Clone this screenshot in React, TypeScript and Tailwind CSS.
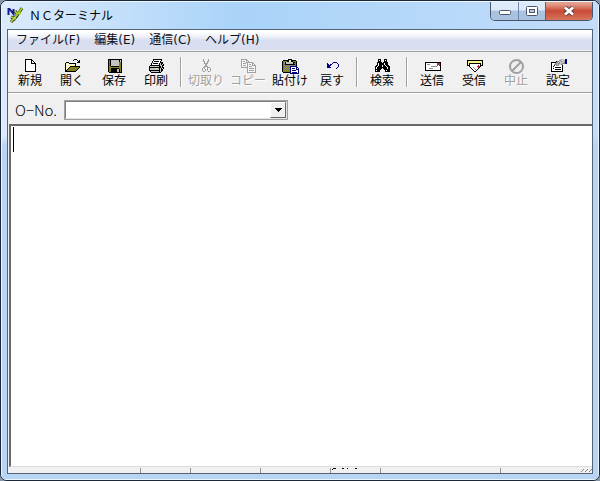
import React from "react";

const PALETTE: Record<string, string> = {
  k: "#000000",
  w: "#ffffff",
  y: "#f5f08a",
  o: "#808020",
  g: "#8c8c8c",
  s: "#c4c4c4",
  b: "#000080",
  r: "#c02040",
  l: "#a0a0a0",
  v: "#f8f8f8",
};

const ICONS: Record<string, string[]> = {
  blank: [
    "",
    "...kkkkkkk",
    "...kwwwwwkk",
    "...kwwwwwkwk",
    "...kwwwwwkwwk",
    "...kwwwwwkkkkk",
    "...kwwwwwwwwwk",
    "...kwwwwwwwwwk",
    "...kwwwwwwwwwk",
    "...kwwwwwwwwwk",
    "...kwwwwwwwwwk",
    "...kwwwwwwwwwk",
    "...kwwwwwwwwwk",
    "...kkkkkkkkkkk",
  ],
  open: [
    "",
    "..........kkk",
    ".........k...k.k",
    "..............kk",
    "..kkk........kkk",
    ".kywykkkkkkk",
    ".kwywywywywk",
    ".kywywywywyk",
    ".kwywykkkkkkkkkk",
    ".kywykoooooooook",
    ".kwykoooooooook",
    ".kykoooooooook",
    ".kkoooooooook",
    ".kkkkkkkkkkk",
  ],
  save: [
    "",
    "..kkkkkkkkkkkkkk",
    "..kokssssssssksk",
    "..kokssssssssksk",
    "..kokssssssssook",
    "..kokssssssssook",
    "..kokssssssssook",
    "..kokssssssssook",
    "..kookkkkkkkkook",
    "..kooooooooooook",
    "..kookkkkkkkkook",
    "..kookkkkkksskok",
    "..kookkkkkksskok",
    "..kookkkkkksskok",
    "...kkkkkkkkkkkkk",
  ],
  print: [
    "",
    ".....kkkkkkkkk",
    ".....kwwwwwwwk",
    "....kwkkkkkwk",
    "....kwwwwwwwkkk",
    "...kwkkkkkwkskk",
    "...kwwwwwwwksksk",
    "..kkkkkkkkkksskk",
    ".kssssssssskksk",
    ".kkkkkkkkkkkkskk",
    ".ksssssyyssksksk",
    ".kssssssssskskk",
    ".kkkkkkkkkkkskk",
    "..kssssssssksk",
    "...kkkkkkkkkk",
  ],
  cut: [
    "",
    ".....l....l",
    ".....l....l",
    ".....ll..ll",
    "......l..l",
    "......llll",
    ".......ll",
    ".......ll",
    "......llll",
    ".....ll..lll",
    "....l.l..l..l",
    "....l..l.l..l",
    "....l..l.l..l",
    ".....ll...ll",
  ],
  copy: [
    "",
    ".llllll",
    ".lvvvvll",
    ".lvllvlvl",
    ".lvvvvlllllll",
    ".lvlllvlvvvvll",
    ".lvvvvvlvllvlvl",
    ".lvlllvlvvvvllll",
    ".lvvvvvlvlllvvvl",
    ".lllllllvvvvvvvl",
    ".......lvlllllvl",
    ".......lvvvvvvvl",
    ".......lvlllllvl",
    ".......lvvvvvvvl",
    ".......lllllllll",
  ],
  paste: [
    "",
    "......kkkk",
    ".kkkkkkyykkkkk",
    "kooookkyykkoook",
    "kogkssssssskkok",
    "kogkssssssskook",
    "kookkkkkkkkkkok",
    "kogogogogogogok",
    "koogogogbbbbbbb",
    "kogogogobwwwwwbb",
    "koogogogbwbbbwbwb",
    "kogogogobwwwwwbbb",
    "koogogogbwbbbbwwb",
    "kooooooobwwwwwwwb",
    ".kkkkkkkbwbbbbbwb",
    "........bbbbbbbbb",
  ],
  undo: [
    "",
    "",
    "",
    "",
    ".........bbbb",
    "...b....b....b",
    "...bb.bb......b",
    "...bbbb.......b",
    "...bbb........b",
    "...bbbb......b",
    "............b",
  ],
  find: [
    "",
    "....kkk...kkk",
    "....kwk...kwk",
    "....kkk...kkk",
    "...kkkkk.kkkkk",
    "...kwkkkkkwkkk",
    "...kwkkkkkwkkk",
    "..kkwkkkwkkwkkk",
    ".kkwkkkkwkkkwkkk",
    ".kwkkkkkkkkkkwkk",
    ".kwkkkkk.kkkkwkk",
    ".kkkkkk...kkkkkk",
    ".kwkkk.....kwkkk",
    ".kkkkk.....kkkkk",
  ],
  send: [
    "",
    "",
    "",
    "",
    ".kkkkkkkkkkkkkkkk",
    ".kwwwwwwwwwwwrrrk",
    ".kwgggwwwwwwwrrrk",
    ".kwwwwwwwwwwwrwrk",
    ".kwwwwwggggggwwwk",
    ".kwwwwwwwwwwwwwwk",
    ".kwwwggggwwwwwwwk",
    ".kwwwwwwwwwwwwwwk",
    ".kkkkkkkkkkkkkkkk",
  ],
  receive: [
    "",
    "",
    ".kkkkkkkkkkkkkkkk",
    ".kyyyyyyyyyyyyyyk",
    ".kyyyyyyyyyyyyyyk",
    ".kykkkkkkkkkkkkyk",
    ".kykwwwwwwwwwwkyk",
    ".kkkwwwwwwwwrwkkk",
    "...kwwwwwwwrrrk",
    "....kwwgwwwwrk",
    ".....kwwgwwwk",
    "......kwwgwk",
    ".......kwwk",
    "........kk",
  ],
  settings: [
    "",
    "..........ssss.bb",
    ".........ggssssbb",
    "......kggssgssgbb",
    ".kkkkkggsgssssgbb",
    ".kwwwggsggssgggbb",
    ".kwwgggsgssgg",
    ".kwwkwgggwwwk",
    ".kwkwwwwwwwwk",
    ".kwwwkkkkkkwk",
    ".kwkwwwwwwwwk",
    ".kwwwkkkkkkwk",
    ".kwwwwwwwwwwk",
    ".kkkkkkkkkkkk",
  ],
};

function Glyph({ name }: { name: string }) {
  if (name === "stop") {
    return (
      <svg className="block size-4" viewBox="0 0 16 16" fill="none" aria-hidden="true">
        <circle cx="8.5" cy="8.5" r="6.5" stroke="#a0a0a0" strokeWidth="2" />
        <path d="M4 13 13 4" stroke="#a0a0a0" strokeWidth="2" />
      </svg>
    );
  }
  return (
    <svg className="block h-4 w-[17px]" viewBox="0 0 17 16" shapeRendering="crispEdges" aria-hidden="true">
      {ICONS[name].map((row, y) =>
        row.split("").map((c, x) =>
          c === "." ? null : <rect key={`${x}-${y}`} x={x} y={y} width="1" height="1" fill={PALETTE[c]} />
        )
      )}
    </svg>
  );
}

type Tool = { label: string; icon: string; disabled?: boolean };

const GROUPS: Tool[][] = [
  [
    { label: "新規", icon: "blank" },
    { label: "開く", icon: "open" },
    { label: "保存", icon: "save" },
    { label: "印刷", icon: "print" },
  ],
  [
    { label: "切取り", icon: "cut", disabled: true },
    { label: "コピー", icon: "copy", disabled: true },
    { label: "貼付け", icon: "paste" },
    { label: "戻す", icon: "undo" },
  ],
  [{ label: "検索", icon: "find" }],
  [
    { label: "送信", icon: "send" },
    { label: "受信", icon: "receive" },
    { label: "中止", icon: "stop", disabled: true },
    { label: "設定", icon: "settings" },
  ],
];

function TitleBar() {
  return (
    <header className="flex h-[27px] items-start justify-between">
      <div className="flex items-center gap-[6px] pt-[3px]">
        <svg className="h-[17px] w-4" viewBox="0 0 16 17" aria-hidden="true">
          <path d="M1.5 8V2h1l4 5V2" fill="none" stroke="#101c90" strokeWidth="2" />
          <path d="M15 1 9 10 4 15M8 4l3 4M4 10l5 2" fill="none" stroke="#253018" strokeWidth="3" />
          <path d="M15 1 10 8 4 15M8 4l3 4M4 10l5 2M12 7l2-1" fill="none" stroke="#b0d428" strokeWidth="1.8" />
        </svg>
        <h1 className="text-xs leading-5 text-black">ＮＣターミナル</h1>
      </div>
      <div className="flex h-[19px] w-[103px] overflow-hidden rounded-b-[5px] border border-t-0 border-[#46566c]">
        <button
          aria-label="最小化"
          className="flex w-7 items-center justify-center border-r border-[#7189a6] bg-linear-to-b from-[#dceafa] from-45% to-[#a9c2df] to-50% pt-1"
        >
          <svg className="h-[6px] w-3" viewBox="0 0 12 6" aria-hidden="true">
            <rect x=".5" y=".5" width="11" height="4" rx="1" fill="#fff" stroke="#4d5668" />
          </svg>
        </button>
        <button
          aria-label="最大化"
          className="flex w-[27px] items-center justify-center border-r border-[#59606e] bg-linear-to-b from-[#dceafa] from-45% to-[#a9c2df] to-50%"
        >
          <svg className="h-[10px] w-3" viewBox="0 0 12 10" aria-hidden="true">
            <rect x=".5" y=".5" width="11" height="9" rx="1" fill="#fff" stroke="#4d5668" />
            <rect x="3.5" y="3.5" width="5" height="3" fill="#b8cce4" stroke="#4d5668" />
          </svg>
        </button>
        <button
          aria-label="閉じる"
          className="flex flex-1 items-center justify-center bg-linear-to-b from-[#e3a08f] from-10% via-[#c94a35] via-50% to-[#d4755b]"
        >
          <svg className="h-[10px] w-3" viewBox="0 0 12 10" aria-hidden="true">
            <path d="m2 1.5 8 7m0-7-8 7" stroke="#583c40" strokeWidth="4.6" />
            <path d="m2 1.5 8 7m0-7-8 7" stroke="#fff" strokeWidth="2.8" />
          </svg>
        </button>
      </div>
    </header>
  );
}

function MenuBar() {
  return (
    <nav className="flex h-[21px] shrink-0 items-center gap-[14px] border-b border-[#f0f0f0] bg-linear-to-b from-white from-10% via-[#e8ecf6] via-40% to-[#d9def0] to-50% px-2 font-['DejaVu_Sans','Noto_Sans_CJK_JP',sans-serif]">
      {["ファイル(F)", "編集(E)", "通信(C)", "ヘルプ(H)"].map((m) => (
        <button key={m} className="text-xs leading-5 whitespace-nowrap text-[#101018]">
          {m}
        </button>
      ))}
    </nav>
  );
}

function ToolBar() {
  return (
    <div role="toolbar" className="flex h-[42px] shrink-0 border-t border-b border-t-[#a0a0a0] border-b-[#a0a0a0] pl-px">
      {GROUPS.map((group, i) => (
        <React.Fragment key={i}>
          {i > 0 && (
            <div className="flex w-2 shrink-0 justify-center py-[5px]">
              <div className="w-[2px] border-r border-l border-r-white border-l-[#a0a0a0]" />
            </div>
          )}
          {group.map((t) => (
            <button
              key={t.label}
              disabled={t.disabled}
              className="flex w-[42px] shrink-0 flex-col items-center pt-[6px] text-xs leading-3 whitespace-nowrap text-black disabled:text-[#a0a0a0]"
            >
              <Glyph name={t.icon} />
              <span className={t.disabled ? "[text-shadow:1px_1px_0_#fff]" : ""}>{t.label}</span>
            </button>
          ))}
        </React.Fragment>
      ))}
    </div>
  );
}

function ProgramNumber() {
  return (
    <div className="flex h-[31px] shrink-0 items-center gap-2 border-t border-white pt-[2px] pl-[7px]">
      <label htmlFor="ono" className="w-[41px] text-[15px] leading-5 font-light whitespace-nowrap text-black">
        O−No.
      </label>
      <div className="relative h-5 w-56">
        <select
          id="ono"
          className="block size-full appearance-none border-2 border-t-[#808080] border-r-[#e4e4e4] border-b-[#e4e4e4] border-l-[#808080] bg-white pl-1 text-xs outline-1 -outline-offset-1 outline-[#a0a0a0]"
        >
          <option></option>
        </select>
        <span className="pointer-events-none absolute top-[2px] right-[2px] flex h-4 w-4 items-center justify-center border border-t-white border-r-[#696969] border-b-[#696969] border-l-white bg-[#f0f0f0]">
          <svg className="h-1 w-[7px]" viewBox="0 0 7 4" shapeRendering="crispEdges" aria-hidden="true">
            <path d="M0 0h7v1H6v1H5v1H4v1H3V3H2V2H1V1H0z" />
          </svg>
        </span>
      </div>
    </div>
  );
}

function Editor() {
  return (
    <div className="relative ml-px flex min-h-0 flex-1">
      <textarea
        aria-label="プログラム"
        className="block w-full resize-none border-t-2 border-b border-l-2 border-t-[#696969] border-b-[#d8dde2] border-l-[#696969] bg-white p-1 text-base outline-none"
      />
      <span className="pointer-events-none absolute top-[3px] left-1 h-[25px] w-px bg-black" />
    </div>
  );
}

function StatusBar() {
  return (
    <footer className="flex h-[6px] shrink-0 items-end justify-between bg-[#f0f0f0] pl-1">
      <div className="flex h-[5px]">
        <div className="w-[129px] border-r border-[#909090]" />
        <div className="w-[50px] border-r border-[#909090]" />
        <div className="w-[70px] border-r border-[#909090]" />
        <div className="w-[70px] border-r border-[#909090]" />
        <div className="w-[50px] border-r border-[#909090]">
          <svg className="block h-[2px] w-7" viewBox="0 0 28 2" shapeRendering="crispEdges" aria-hidden="true">
            <path d="M2 0h3v1H2zM1 1h1v1H1zM11 0h2v1h-2zM16 0h1v1h-1zM24 0h2v1h-2z" />
          </svg>
        </div>
        <div className="w-[120px] border-r border-[#909090]" />
      </div>
      <svg className="h-[5px] w-3" viewBox="0 0 12 5" aria-hidden="true">
        <path d="m1 4 3-3m1 3 3-3m1 3 3-3" stroke="#858585" strokeWidth="1" />
      </svg>
    </footer>
  );
}

export default function App() {
  return (
    <div className="h-screen min-h-80 bg-[#8798ad] font-['Noto_Sans_CJK_JP',sans-serif]">
      <main className="flex h-full flex-col overflow-hidden rounded-[7px] border border-[#1c2838] bg-linear-to-r from-[#dcebfb] via-[#a9d3f9] via-40% to-[#c3ddfa]">
        <div className="flex min-h-0 flex-1 flex-col border border-[#eaf6ff] bg-linear-to-b from-transparent from-28% to-[#b9d5f5] to-30% px-[5px] pb-[5px]">
          <TitleBar />
          <div className="flex min-h-0 flex-1 flex-col border border-[#536477] bg-[#f0f0f0]">
            <MenuBar />
            <ToolBar />
            <ProgramNumber />
            <Editor />
            <StatusBar />
          </div>
        </div>
      </main>
    </div>
  );
}
